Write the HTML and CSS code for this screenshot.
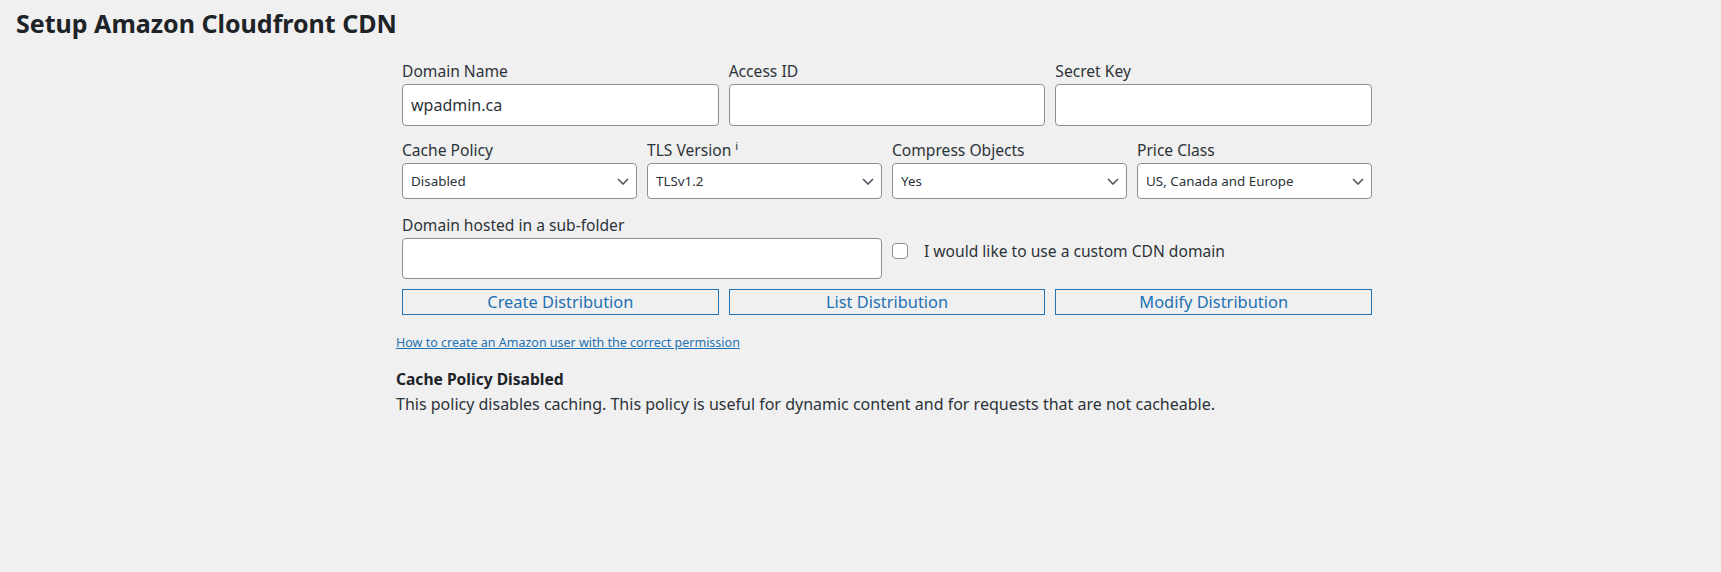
FILE: index.html
```html
<!DOCTYPE html>
<html lang="en">
<head>
<meta charset="utf-8">
<title>Setup Amazon Cloudfront CDN</title>
<link rel="stylesheet" href="styles.css">
</head>
<body>
<div class="wrap">
  <h1 class="page-title">Setup Amazon Cloudfront CDN</h1>
  <div class="panel">
    <form class="cdn-form">
      <div class="field span-4">
        <label class="lbl">Domain Name</label>
        <input class="text-input" type="text" value="wpadmin.ca">
      </div>
      <div class="field span-4">
        <label class="lbl">Access ID</label>
        <input class="text-input" type="text">
      </div>
      <div class="field span-4">
        <label class="lbl">Secret Key</label>
        <input class="text-input" type="text">
      </div>

      <div class="field span-3 row2">
        <label class="lbl">Cache Policy</label>
        <div class="select-wrap">
          <select class="sel"><option>Disabled</option></select>
          <svg class="chev" viewBox="0 0 12 7" width="12" height="7"><path d="M1 1l5 5 5-5" fill="none" stroke="#50575e" stroke-width="1.6"/></svg>
        </div>
      </div>
      <div class="field span-3 row2">
        <label class="lbl">TLS Version <sup class="info">i</sup></label>
        <div class="select-wrap">
          <select class="sel"><option>TLSv1.2</option></select>
          <svg class="chev" viewBox="0 0 12 7" width="12" height="7"><path d="M1 1l5 5 5-5" fill="none" stroke="#50575e" stroke-width="1.6"/></svg>
        </div>
      </div>
      <div class="field span-3 row2">
        <label class="lbl">Compress Objects</label>
        <div class="select-wrap">
          <select class="sel"><option>Yes</option></select>
          <svg class="chev" viewBox="0 0 12 7" width="12" height="7"><path d="M1 1l5 5 5-5" fill="none" stroke="#50575e" stroke-width="1.6"/></svg>
        </div>
      </div>
      <div class="field span-3 row2">
        <label class="lbl">Price Class</label>
        <div class="select-wrap">
          <select class="sel"><option>US, Canada and Europe</option></select>
          <svg class="chev" viewBox="0 0 12 7" width="12" height="7"><path d="M1 1l5 5 5-5" fill="none" stroke="#50575e" stroke-width="1.6"/></svg>
        </div>
      </div>

      <div class="field span-6 row3">
        <label class="lbl">Domain hosted in a sub-folder</label>
        <input class="text-input tall" type="text">
      </div>
      <div class="check-field span-6 row3">
        <label class="check-label"><input class="cb" type="checkbox"><span>I would like to use a custom CDN domain</span></label>
      </div>

      <button type="button" class="btn span-4">Create Distribution</button>
      <button type="button" class="btn span-4">List Distribution</button>
      <button type="button" class="btn span-4">Modify Distribution</button>
    </form>

    <p class="help-link"><a href="#">How to create an Amazon user with the correct permission</a></p>
    <h3 class="policy-title">Cache Policy Disabled</h3>
    <p class="policy-desc">This policy disables caching. This policy is useful for dynamic content and for requests that are not cacheable.</p>
  </div>
</div>
</body>
</html>
```

FILE: styles.css
```css
* { box-sizing: border-box; }
html, body { margin: 0; padding: 0; }
body {
  background: #f0f0f1;
  font-family: "Noto Sans", "Open Sans", sans-serif;
  color: #2c3338;
  width: 1721px;
  min-height: 572px;
}
.wrap { padding: 0 0 0 16px; }
.page-title {
  margin: 0;
  padding: 7px 0 0;
  font-size: 25px;
  font-weight: 700;
  line-height: 32px;
  color: #1d2327;
}
.panel {
  margin-left: 380px;
  width: 982px;
  padding-top: 22px;
}
.cdn-form {
  display: grid;
  grid-template-columns: repeat(12, 1fr);
  column-gap: 10px;
  row-gap: 0;
  padding: 0 6px;
}
.span-3 { grid-column: span 3; }
.span-4 { grid-column: span 4; }
.span-6 { grid-column: span 6; }
.field { display: flex; flex-direction: column; }
.lbl {
  font-size: 15.6px;
  line-height: 20px;
  margin-bottom: 3px;
  color: #2c3338;
}
.info { font-size: 11px; vertical-align: top; position: relative; top: -4px; }
.text-input {
  height: 42px;
  border: 1px solid #8c8f94;
  border-radius: 4px;
  background: #fff;
  font-family: inherit;
  font-size: 16px;
  color: #2c3338;
  padding: 0 8px;
}
.text-input.tall { height: 41px; }
.row2 { margin-top: 14px; }
.row3 { margin-top: 16px; }
.select-wrap { position: relative; }
.sel {
  width: 100%;
  height: 36px;
  appearance: none;
  -webkit-appearance: none;
  border: 1px solid #8c8f94;
  border-radius: 4px;
  background: #fff;
  font-family: inherit;
  font-size: 13.4px;
  color: #2c3338;
  padding: 0 24px 0 8px;
}
.chev {
  position: absolute;
  right: 8px;
  top: 15px;
  pointer-events: none;
}
.check-field { display: flex; align-items: flex-start; padding-top: 25px; }
.check-label { display: flex; align-items: center; font-size: 15.6px; }
.cb {
  appearance: none;
  -webkit-appearance: none;
  width: 16px;
  height: 16px;
  margin: 0 16px 0 0;
  border: 1px solid #8c8f94;
  border-radius: 4px;
  background: #fff;
}
.btn {
  margin-top: 10px;
  height: 26px;
  background: transparent;
  border: 1px solid #2271b1;
  border-radius: 0;
  color: #2271b1;
  font-family: inherit;
  font-size: 16.4px;
  line-height: 22px;
  padding: 0;
  cursor: pointer;
}
.help-link { margin: 20px 0 0; font-size: 12.5px; line-height: 16px; }
.help-link a { color: #2271b1; text-decoration: underline; }
.policy-title { margin: 18px 0 0; font-size: 15.6px; font-weight: 700; line-height: 20px; color: #1d2327; }
.policy-desc { margin: 4px 0 0; font-size: 16px; line-height: 22px; color: #2c3338; }
```
